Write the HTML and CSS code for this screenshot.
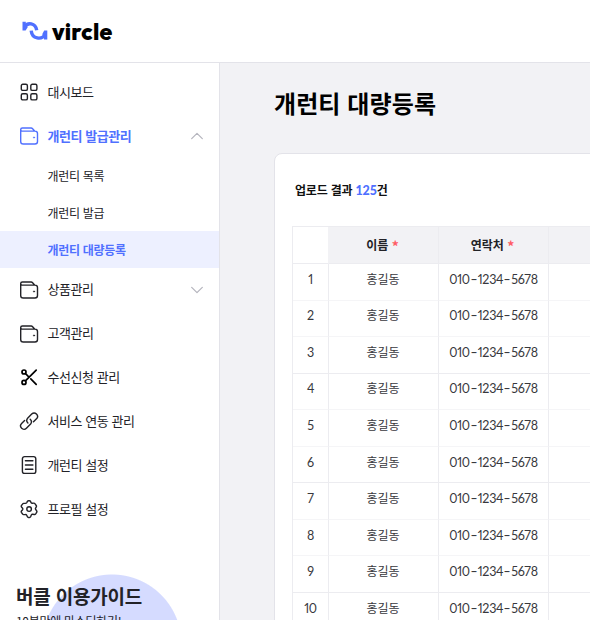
FILE: index.html
```html
<!DOCTYPE html>
<html lang="ko">
<head>
<meta charset="utf-8">
<title>개런티 대량등록</title>
<link rel="stylesheet" href="styles.css">
</head>
<body>
<svg width="0" height="0" class="defs">
  <symbol id="wallet" viewBox="0 0 20 20"><path d="M1.7 3.6V15.4Q1.7 18 4.3 18H16Q18.5 18 18.5 15.5V7.6Q18.5 5.1 16 5.1H3.1Q1.7 5.1 1.7 3.5Q1.7 2 3.4 2H12.2Q13 2 13.6 2.7L15.6 5"/><circle class="dot" cx="15" cy="11.5" r=".65"/></symbol>
</svg>
<header class="topbar">
  <svg class="mark" viewBox="0 0 26 20"><g><path d="M2.3 6.2C5.5 .9 13.4 1.8 14.7 9.2"/><path d="M9.2 9.6C10 18.1 19.8 19.5 23.4 13"/></g><path class="fill" d="M.5 .8H3.8V3.5L5.8 6L3.6 9.4H.5ZM25.3 9.4V18.4H22V15.8L20.2 13.2L22.2 9.4Z"/></svg>
  <span class="wordmark">vircle</span>
</header>
<div class="shell">
<aside class="sidebar">
  <nav>
    <a class="item"><svg viewBox="0 0 20 20"><rect x="2.3" y="2.3" width="6.1" height="6.1" rx="1.5"/><rect x="11.8" y="2.3" width="6.1" height="6.1" rx="1.5"/><rect x="2.3" y="11.8" width="6.1" height="6.1" rx="1.5"/><rect x="11.8" y="11.8" width="6.1" height="6.1" rx="1.5"/></svg><span>대시보드</span></a>
    <a class="item open"><svg><use href="#wallet"/></svg><span>개런티 발급관리</span><svg class="chev" viewBox="0 0 12 8"><path d="M.7 6.6L6 1.4L11.3 6.6"/></svg></a>
    <div class="sub">
      <a><span>개런티 목록</span></a>
      <a><span>개런티 발급</span></a>
      <a class="active"><span>개런티 대량등록</span></a>
    </div>
    <a class="item"><svg><use href="#wallet"/></svg><span>상품관리</span><svg class="chev" viewBox="0 0 12 8"><path d="M.7 1.4L6 6.6L11.3 1.4"/></svg></a>
    <a class="item"><svg><use href="#wallet"/></svg><span>고객관리</span></a>
    <a class="item"><svg class="scissors" viewBox="0 0 20 20"><circle cx="5" cy="5" r="2"/><circle cx="5" cy="15.4" r="2"/><path d="M6.4 13.9L17.2 3.1M6.4 6.5L9 9.1M11.8 11.9L17.2 17.3"/></svg><span>수선신청 관리</span></a>
    <a class="item"><svg viewBox="0 0 20 20"><path d="M8.9 12.1A3.6 3.6 0 0 1 8.6 7.3L12.7 3.1A3.3 3.3 0 0 1 17.5 7.8L14.5 10.8M11.2 8.2A3.6 3.6 0 0 1 11.6 13L7.4 17.2A3.3 3.3 0 0 1 2.6 12.5L5.6 9.5"/></svg><span>서비스 연동 관리</span></a>
    <a class="item"><svg viewBox="0 0 20 20"><rect x="3.4" y="1.6" width="13.4" height="16.8" rx="2.2"/><path d="M6.4 5.8H13.9M6.4 10H13.9M6.4 14.2H13.9"/></svg><span>개런티 설정</span></a>
    <a class="item"><svg viewBox="-.3 -.3 20 20"><path d="M7.5 3.3L8.1 2.1Q8.5 1.4 9.3 1.4H10.1Q10.9 1.4 11.2 2.1L11.8 3.3Q12.2 4.1 13.1 4L14.4 3.8Q15.2 3.7 15.6 4.4L16.9 6.2Q17.4 6.9 17 7.6L16.3 8.8Q15.9 9.5 16.4 10.2L17.4 11.6Q17.8 12.2 17.5 12.9L16.4 14.6Q15.9 15.3 15.1 15.2L13.3 15Q12.5 14.9 12 15.7L11.3 17.5Q11 18.2 10.2 18.2H9.2Q8.4 18.2 8.1 17.5L7.4 15.9Q7 15.1 6.1 15.2L4.5 15.3Q3.7 15.4 3.3 14.7L2.1 13Q1.7 12.3 2.2 11.7L3.3 10.4Q3.8 9.7 3.3 9L2.2 7.7Q1.7 7.1 2.1 6.4L3.2 4.8Q3.6 4.1 4.4 4.1L6 4.1Q7 4.1 7.5 3.3Z"/><circle cx="9.8" cy="9.8" r="2.3"/></svg><span>프로필 설정</span></a>
  </nav>
  <section class="guide">
    <h2>버클 이용가이드</h2>
    <p>10분만에 마스터하기!</p>
  </section>
</aside>
<main>
  <h1>개런티 대량등록</h1>
  <section class="card">
    <p class="result">업로드 결과 <b>125</b>건</p>
    <table>
      <colgroup><col class="c-no"><col class="c-name"><col class="c-tel"><col class="c-rest"></colgroup>
      <thead><tr><th></th><th>이름 <em>*</em></th><th>연락처 <em>*</em></th><th></th></tr></thead>
      <tbody>
        <tr><td>1</td><td>홍길동</td><td>010<i>-</i>1234<i>-</i>5678</td><td></td></tr>
        <tr><td>2</td><td>홍길동</td><td>010<i>-</i>1234<i>-</i>5678</td><td></td></tr>
        <tr><td>3</td><td>홍길동</td><td>010<i>-</i>1234<i>-</i>5678</td><td></td></tr>
        <tr><td>4</td><td>홍길동</td><td>010<i>-</i>1234<i>-</i>5678</td><td></td></tr>
        <tr><td>5</td><td>홍길동</td><td>010<i>-</i>1234<i>-</i>5678</td><td></td></tr>
        <tr><td>6</td><td>홍길동</td><td>010<i>-</i>1234<i>-</i>5678</td><td></td></tr>
        <tr><td>7</td><td>홍길동</td><td>010<i>-</i>1234<i>-</i>5678</td><td></td></tr>
        <tr><td>8</td><td>홍길동</td><td>010<i>-</i>1234<i>-</i>5678</td><td></td></tr>
        <tr><td>9</td><td>홍길동</td><td>010<i>-</i>1234<i>-</i>5678</td><td></td></tr>
        <tr><td>10</td><td>홍길동</td><td>010<i>-</i>1234<i>-</i>5678</td><td></td></tr>
      </tbody>
    </table>
  </section>
</main>
</div>
</body>
</html>
```

FILE: styles.css
```css
* { box-sizing: border-box; }
body {
  margin: 0;
  width: 590px;
  height: 620px;
  overflow: hidden;
  background: #fff;
  color: #222227;
  font-family: "Noto Sans CJK KR", sans-serif;
}
h1, h2, p { margin: 0; white-space: nowrap; }
svg { fill: none; flex: none; }
.defs { position: absolute; }
.topbar {
  height: 63px;
  display: flex;
  padding: 21px 0 0 22px;
  border-bottom: 1px solid #e3e3e9;
}
.mark { width: 26px; height: 20px; }
.mark g { stroke: #5070ff; stroke-width: 3.4; }
.mark .fill { fill: #5070ff; }
.wordmark {
  margin-left: 4px;
  font: 800 23px/21px "Outfit", "Lato", sans-serif;
  color: #000;
  letter-spacing: 0.2px;
}
.shell { display: flex; height: 557px; }
.sidebar {
  width: 220px;
  flex: none;
  padding-top: 7px;
  border-right: 1px solid #e3e3e9;
  overflow: hidden;
}
.item {
  height: 43.85px;
  display: flex;
  align-items: center;
  padding: 0 16px 0 19px;
  font-size: 13px;
  line-height: 20px;
  letter-spacing: -0.45px;
}
.item svg { width: 20px; height: 20px; stroke: #222227; stroke-width: 1.4; stroke-linecap: round; stroke-linejoin: round; }
.item > span { margin: 0 0 0 8.6px; white-space: nowrap; }
.sub ~ .item > span { margin-top: -1px; }
.item .scissors { stroke: #000; stroke-width: 1.7; }
.item .chev { width: 12px; height: 8px; margin-left: auto; stroke: #b4b4bd; stroke-width: 1.2; }
.dot { fill: currentColor; stroke: currentColor; stroke-width: 0.5; }
.open { color: #5070ff; font-weight: 700; }
.open svg:first-child { stroke: #5070ff; }
.sub a {
  height: 36.6px;
  display: flex;
  align-items: center;
  padding-left: 47.6px;
  font-size: 12px;
  line-height: 20px;
  letter-spacing: -0.3px;
}
.sub .active { height: 37px; padding-top: 2px; background: #edf0ff; color: #5070ff; font-weight: 700; }
.guide {
  height: 140px;
  margin-top: 43px;
  padding: 7px 0 0 16px;
  background: radial-gradient(circle at 112px 70px, #d5dbff 69px, transparent 70px);
}
.guide h2 { font-size: 19px; line-height: 30px; font-weight: 700; letter-spacing: -0.2px; }
.guide p { font-size: 12px; line-height: 20px; letter-spacing: -0.3px; }
main {
  flex: 1;
  min-width: 0;
  padding: 23px 0 0 54px;
  background: #f2f2f5;
  overflow: hidden;
}
h1 { font-size: 24px; line-height: 34px; font-weight: 700; color: #000; letter-spacing: 0.1px; }
.card {
  width: 500px;
  height: 600px;
  margin-top: 33px;
  padding: 25px 0 0 17px;
  border: 1px solid #e3e3e9;
  border-radius: 8px;
  background: #fff;
}
.result { height: 22px; padding-left: 3px; font-size: 12px; line-height: 22px; font-weight: 700; color: #111; letter-spacing: -0.2px; }
.result b { color: #5070ff; font-family: "Lato", sans-serif; font-size: 12.5px; }
table {
  width: 460px;
  margin-top: 25px;
  table-layout: fixed;
  border-collapse: separate;
  border-spacing: 0;
  border-top: 1px solid #ececf0;
  border-left: 1px solid #ececf0;
}
.c-no { width: 36px; }
.c-name { width: 110px; }
.c-tel { width: 110px; }
th, td {
  padding: 0;
  text-align: center;
  white-space: nowrap;
  border-right: 1px solid #ececf0;
  border-bottom: 1px solid #ececf0;
}
tbody td { border-bottom-color: #f5f5f7; }
tbody tr:nth-child(3n) td { border-bottom-color: #ececf0; }
th { height: 37px; padding: 0 2px 1px 0; background: #f2f2f5; font-size: 12px; line-height: 20px; }
th:first-child { background: #fff; border-right-color: #f2f2f5; }
th em { color: #ff5c65; font-style: normal; font-weight: 700; font-size: 14px; line-height: 12px; vertical-align: -2px; }
td { height: 36.55px; padding: 0 1px 6px 0; font-size: 12px; line-height: 20px; color: #38383d; }
td:nth-child(odd) {
  padding: 0 0 4px;
  font-family: "Lato", sans-serif;
  font-size: 12.5px;
  letter-spacing: -0.25px;
  font-variant-numeric: proportional-nums;
}
td i { display: inline-block; font-style: normal; width: 7.8px; transform: scaleX(1.6); }
```
